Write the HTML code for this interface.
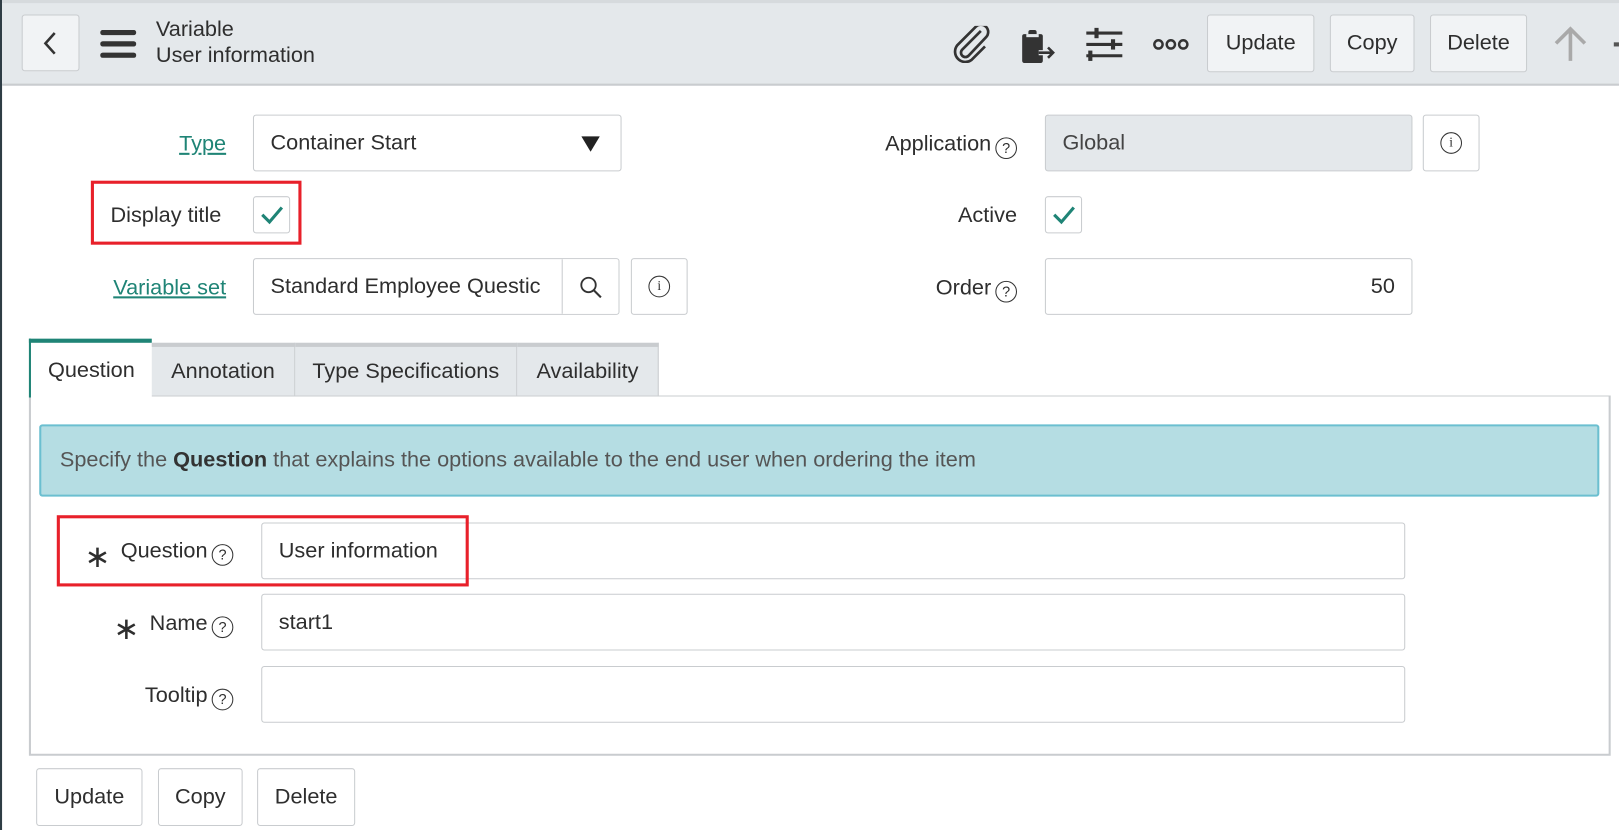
<!DOCTYPE html>
<html><head><meta charset="utf-8"><style>
*{box-sizing:border-box;margin:0;padding:0}
html,body{width:1619px;height:830px;overflow:hidden;background:#fff}
#w{position:absolute;left:0;top:0;width:1568px;height:804px;transform:scale(1.0325);transform-origin:0 0;font-family:"Liberation Sans",sans-serif;color:#2e2e2e;font-size:21px}
.a{position:absolute}
.btn{position:absolute;border:1px solid #c9cccf;border-radius:3px;background:#f1f3f5;display:flex;align-items:center;justify-content:center;font-size:21px;color:#2e2e2e}
.in{position:absolute;border:1px solid #c9cccf;border-radius:3px;background:#fff;display:flex;align-items:center;padding-left:16px;font-size:21px}
.lbl{position:absolute;text-align:right;font-size:21px;line-height:24px;white-space:nowrap}
.lk{color:#1f8476;text-decoration:underline}
.q{display:inline-block;width:21px;height:21px;border:1.6px solid #333;border-radius:50%;font-size:14px;line-height:18px;text-align:center;font-weight:normal;vertical-align:-2px;margin-left:4px;font-family:"Liberation Sans",sans-serif}
.cb{position:absolute;width:36px;height:36px;border:1px solid #c9cccf;border-radius:3px;background:#fff}
.red{position:absolute;border:3px solid #e8202a}
.tab{position:absolute;top:332px;height:51px;border-top:4px solid #c9cccf;border-right:1px solid #c9cccf;background:#e4e8eb;display:flex;align-items:center;justify-content:center;font-size:21px}
.ast{font-size:30px;line-height:20px;vertical-align:-9px;margin-right:10px}
</style></head><body><div id="w">
<div class="a" style="left:0;top:0;width:2px;height:804px;background:#2f3d45"></div>
<div class="a" style="left:2px;top:0;width:1566px;height:83px;background:#e4e8eb;border-top:3px solid #d6dadd;border-bottom:2px solid #c9cccf"></div>
<div class="btn" style="left:21px;top:14px;width:56px;height:55px"><svg width="20" height="26" viewBox="0 0 20 26"><path d="M14 3 L5 13 L14 23" fill="none" stroke="#333" stroke-width="2.5"/></svg></div>
<svg class="a" style="left:97px;top:29px" width="35" height="27"><rect x="0" y="0" width="35" height="5" rx="2.5" fill="#333"/><rect x="0" y="11" width="35" height="5" rx="2.5" fill="#333"/><rect x="0" y="22" width="35" height="5" rx="2.5" fill="#333"/></svg>
<div class="a" style="left:151px;top:16px;font-size:21px;line-height:25px">Variable<br>User information</div>
<svg class="a" style="left:922px;top:25px" width="38" height="36" viewBox="0 0 38 36"><path d="M28 6 L10 24 a4 4 0 0 0 6 6 L33 12 a7 7 0 0 0 -10 -10 L5 20 a10 10 0 0 0 14 14 L32 21" fill="none" stroke="#333" stroke-width="2.6" transform="translate(0,-1)"/></svg>
<svg class="a" style="left:988px;top:27px" width="36" height="36" viewBox="0 0 36 36"><rect x="2" y="6" width="20" height="28" rx="2" fill="#333"/><rect x="8" y="2" width="8" height="7" rx="2" fill="#333"/><rect x="6" y="6" width="12" height="3" fill="#e4e8eb"/><path d="M18 24 H32 M27 19 L32 24 L27 29" fill="none" stroke="#e4e8eb" stroke-width="5"/><path d="M18 24 H32 M27 19 L32 24 L27 29" fill="none" stroke="#333" stroke-width="2.5"/></svg>
<svg class="a" style="left:1052px;top:26px" width="36" height="34" viewBox="0 0 36 34"><path d="M0 6 H35 M0 17 H35 M0 28 H35" stroke="#333" stroke-width="3"/><rect x="8" y="1" width="4" height="10" fill="#333"/><rect x="24" y="12" width="4" height="10" fill="#333"/><rect x="2" y="23" width="4" height="10" fill="#333"/></svg>
<svg class="a" style="left:1116px;top:36px" width="38" height="14"><circle cx="6" cy="7" r="4" fill="none" stroke="#333" stroke-width="2.4"/><circle cx="18" cy="7" r="4" fill="none" stroke="#333" stroke-width="2.4"/><circle cx="30" cy="7" r="4" fill="none" stroke="#333" stroke-width="2.4"/></svg>
<div class="btn" style="left:1169px;top:14px;width:104px;height:56px">Update</div>
<div class="btn" style="left:1288px;top:14px;width:82px;height:56px">Copy</div>
<div class="btn" style="left:1385px;top:14px;width:94px;height:56px">Delete</div>
<svg class="a" style="left:1503px;top:25px" width="36" height="36"><path d="M18 34 V3 M4 17 L18 3 L32 17" fill="none" stroke="#a9a9a9" stroke-width="3.5"/></svg>
<div class="a" style="left:1563px;top:41px;width:5px;height:4px;background:#555"></div>

<div class="lbl lk" style="right:1349px;top:128px">Type</div>
<div class="in" style="left:245px;top:111px;width:357px;height:55px">Container Start<svg class="a" style="right:20px;top:20px" width="18" height="15"><path d="M0 0 H18 L9 15Z" fill="#222"/></svg></div>
<div class="lbl" style="right:583px;top:128px">Application<span class="q">?</span></div>
<div class="in" style="left:1012px;top:111px;width:356px;height:55px;background:#e4e8eb;color:#444">Global</div>
<div class="btn" style="left:1378px;top:111px;width:55px;height:55px;background:#fff"><span class="q" style="margin:0;font-size:13px;font-family:'Liberation Serif',serif">i</span></div>

<div class="lbl" style="left:107px;top:197px">Display title</div>
<div class="cb" style="left:245px;top:190px"><svg width="34" height="34"><path d="M8 17 L15 24 L27 10" fill="none" stroke="#1f8476" stroke-width="3"/></svg></div>
<div class="red" style="left:88px;top:175px;width:204px;height:62px"></div>
<div class="lbl" style="right:583px;top:197px">Active</div>
<div class="cb" style="left:1012px;top:190px"><svg width="34" height="34"><path d="M8 17 L15 24 L27 10" fill="none" stroke="#1f8476" stroke-width="3"/></svg></div>

<div class="lbl lk" style="right:1349px;top:267px">Variable set</div>
<div class="in" style="left:245px;top:250px;width:355px;height:55px;overflow:hidden;white-space:nowrap">Standard Employee Questic<div class="a" style="left:298px;top:0;width:56px;height:53px;border-left:1px solid #c9cccf;background:#fff"><svg class="a" style="left:16px;top:16px" width="24" height="24"><circle cx="9" cy="9" r="7" fill="none" stroke="#333" stroke-width="1.8"/><path d="M14 14 L21 21" stroke="#333" stroke-width="2"/></svg></div></div>
<div class="btn" style="left:611px;top:250px;width:55px;height:55px;background:#fff"><span class="q" style="margin:0;font-size:13px;font-family:'Liberation Serif',serif">i</span></div>
<div class="lbl" style="right:583px;top:267px">Order<span class="q">?</span></div>
<div class="in" style="left:1012px;top:250px;width:356px;height:55px;justify-content:flex-end;padding-right:16px">50</div>

<div class="a" style="left:28px;top:383px;width:1532px;height:349px;border:2px solid #c9cccf;border-top-width:1px"></div>
<div class="a" style="left:28px;top:328px;width:119px;height:57px;background:#fff;border-top:4px solid #1f8476;border-left:2px solid #1f8476;display:flex;align-items:center;justify-content:center">Question</div>
<div class="tab" style="left:147px;width:139px">Annotation</div>
<div class="tab" style="left:286px;width:215px">Type Specifications</div>
<div class="tab" style="left:501px;width:137px">Availability</div>

<div class="a" style="left:38px;top:411px;width:1511px;height:70px;background:#b5dde3;border:2px solid #6bbfd0;border-radius:3px;display:flex;align-items:center;padding-left:18px;color:#555;font-size:21px">Specify the&nbsp;<b style="color:#333">Question</b>&nbsp;that explains the options available to the end user when ordering the item</div>

<div class="lbl" style="right:1342px;top:522px"><span class="ast">∗</span>Question<span class="q">?</span></div>
<div class="in" style="left:253px;top:506px;width:1108px;height:55px">User information</div>
<div class="red" style="left:55px;top:499px;width:399px;height:69px"></div>
<div class="lbl" style="right:1342px;top:592px"><span class="ast">∗</span>Name<span class="q">?</span></div>
<div class="in" style="left:253px;top:575px;width:1108px;height:55px">start1</div>
<div class="lbl" style="right:1342px;top:662px">Tooltip<span class="q">?</span></div>
<div class="in" style="left:253px;top:645px;width:1108px;height:55px"></div>

<div class="btn" style="left:35px;top:744px;width:103px;height:56px;background:#fff">Update</div>
<div class="btn" style="left:153px;top:744px;width:82px;height:56px;background:#fff">Copy</div>
<div class="btn" style="left:249px;top:744px;width:95px;height:56px;background:#fff">Delete</div>
</div></body></html>
